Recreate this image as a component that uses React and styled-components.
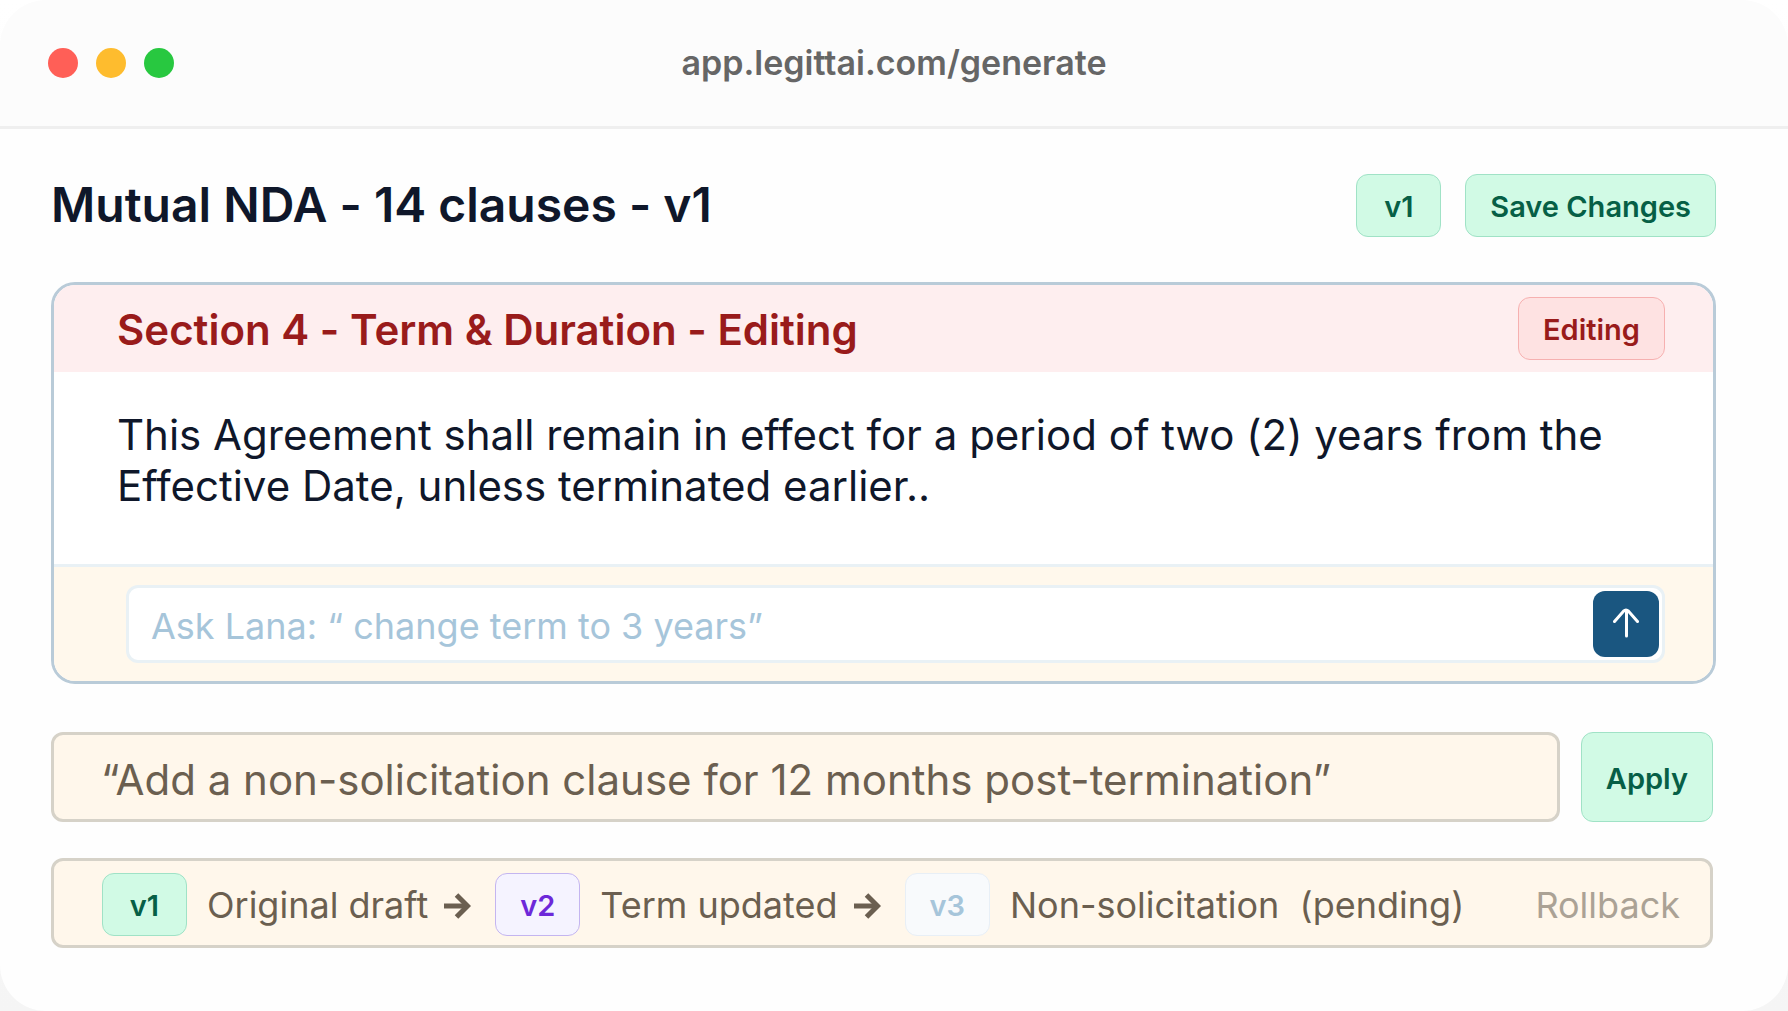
import React, { useState } from "react";
import styled, { createGlobalStyle } from "styled-components";

const GlobalStyle = createGlobalStyle`
  *{ box-sizing:border-box; }
  body{ margin:0; background:linear-gradient(#fff, #f5f5f5); font-family:Inter, sans-serif; font-variant-ligatures:none; }
  button, input{ font-family:inherit; }
`;

/* ===== Window ===== */
const Window = styled.div`
  min-height:100vh; display:flex; flex-direction:column; background:#fefefe;
  border-radius:46px; overflow:hidden;
`;
const TitleBar = styled.header`
  display:grid; grid-template-columns:1fr auto 1fr; align-items:center;
  height:129px; padding:0 48px; background:#fcfcfc; border-bottom:3px solid #efefef;
`;
const Lights = styled.div` display:flex; gap:18px; `;
const Light = styled.span` width:30px; height:30px; border-radius:50%; background:${(p) => p.$color}; `;
const Address = styled.span` color:#666; font-size:34px; font-weight:600; line-height:40px; `;
const Body = styled.main` flex:1; padding:45px 72px 63px 51px; `;

/* ===== Shared parts ===== */
const tones = {
  green: { color:"#065f46", bg:"#d1fae5", line:"#a0e2c6" },
  red: { color:"#991b1b", bg:"#fee2e2", line:"#f6b0b0" },
  violet: { color:"#6d28d9", bg:"#f5f3ff", line:"#c4b5f0" },
  blue: { color:"#a6c5da", bg:"#f8fafc", line:"#e8eff6" },
};
const Pill = styled.span`
  display:inline-flex; align-items:center; justify-content:center; flex:none;
  min-width:85px; height:63px; padding:2px 24px 0; border:1px solid ${(p) => tones[p.$tone].line}; border-radius:12px;
  background:${(p) => tones[p.$tone].bg}; color:${(p) => tones[p.$tone].color};
  font-size:29px; font-weight:600; white-space:nowrap;
`;
const PillButton = styled(Pill).attrs({ as:"button", type:"button" })`
  height:${(p) => (p.$tall ? "90px" : "63px")}; cursor:pointer;
`;

/* ===== Heading ===== */
const Heading = styled.div` display:flex; align-items:center; justify-content:space-between; `;
const Title = styled.h1` margin:0; padding-bottom:2px; color:#0f172a; font-size:48px; font-weight:600; line-height:60px; `;
const Actions = styled.div` display:flex; gap:24px; `;

/* ===== Clause card ===== */
const Card = styled.section`
  margin-top:45px; border:3px solid #b9cbd8; border-radius:24px; background:#fff; overflow:hidden;
`;
const CardHead = styled.div`
  display:flex; align-items:center; justify-content:space-between;
  height:87px; padding:0 48px 0 63px; background:#feeeef;
`;
const CardTitle = styled.h2` margin:0; padding-top:2px; color:#991b1b; font-size:42px; font-weight:600; `;
const ClauseText = styled.p`
  margin:0; min-height:192px; padding:37px 63px 0; color:#0f172a; font-size:42px; line-height:51px;
`;
const CardFoot = styled.div` padding:18px 48px 18px 72px; border-top:3px solid #e9f1f5; background:#fff8ec; `;
const AskBox = styled.form`
  display:flex; align-items:center; height:78px; padding:0 3px 0 22px;
  border:3px solid #e9f1f5; border-radius:12px; background:#fff;
`;
const AskInput = styled.input`
  flex:1; min-width:0; height:66px; padding:4px 0 0; border:0; outline:none; background:none; font-size:36px; color:#0f172a;
  &::placeholder{ color:#a6c5da; opacity:1; }
`;
const SendButton = styled.button`
  display:flex; align-items:center; justify-content:center; width:66px; height:66px; padding:0 0 3px;
  border:0; border-radius:12px; background:#1a5680; cursor:pointer;
`;

/* ===== Prompt + history ===== */
const PromptRow = styled.form` display:flex; gap:21px; margin:48px 3px 0 0; `;
const PromptInput = styled.input`
  flex:1; min-width:0; height:90px; padding:4px 47px 0; border:3px solid #d6d2c8; border-radius:12px;
  background:#fff7eb; color:#6b5f50; font-size:42px; outline:none;
`;
const History = styled.div`
  display:flex; align-items:center; height:90px; margin:36px 3px 0 0; padding:2px 30px 0 48px;
  border:3px solid #d6d2c8; border-radius:12px; background:#fff7eb;
`;
const Step = styled.div` display:flex; align-items:center; margin-right:24px; `;
const StepText = styled.span`
  margin:0 16px 0 20px; padding-top:2px; color:#6b5f50; font-size:36px; white-space:pre;
`;
const Rollback = styled.button`
  margin-left:auto; padding:2px 0 0; border:0; background:none; color:#aba295; font-size:36px; cursor:pointer;
`;

const ArrowUpIcon = () => (
  <svg width="26" height="30" viewBox="0 0 26 30" fill="none" stroke="#fff" strokeWidth="3" strokeLinecap="round" strokeLinejoin="round" aria-hidden="true">
    <path d="M13.5 2.5V28" />
    <path d="M1.5 13.5L10.5 3.2Q13 .8 15.5 3.2L24.5 13.5" />
  </svg>
);

const ArrowRightIcon = () => (
  <svg width="27" height="30" viewBox="0 0 27 30" fill="none" stroke="#6b5f50" strokeWidth="5" aria-hidden="true">
    <path d="M0 17H23" />
    <path d="M12.5 6L23.5 17L12.5 28" />
  </svg>
);

const versions = [
  { id:"v1", tone:"green", text:"Original draft" },
  { id:"v2", tone:"violet", text:"Term updated" },
  { id:"v3", tone:"blue", text:"Non-solicitation  (pending)" },
];

export default function App(){
  const [ask, setAsk] = useState("");
  const [prompt, setPrompt] = useState("“Add a non-solicitation clause for 12 months post-termination”");

  return (
    <>
      <GlobalStyle />
      <Window>
        <TitleBar>
          <Lights>
            <Light $color="#ff5f57" />
            <Light $color="#febc2e" />
            <Light $color="#28c840" />
          </Lights>
          <Address>app.legittai.com/generate</Address>
        </TitleBar>

        <Body>
          <Heading>
            <Title>Mutual NDA - 14 clauses - v1</Title>
            <Actions>
              <Pill $tone="green">v1</Pill>
              <PillButton $tone="green">Save Changes</PillButton>
            </Actions>
          </Heading>

          <Card>
            <CardHead>
              <CardTitle>Section 4 - Term &amp; Duration - Editing</CardTitle>
              <Pill $tone="red">Editing</Pill>
            </CardHead>
            <ClauseText>
              This Agreement shall remain in effect for a period of two (2) years from the Effective Date, unless terminated earlier..
            </ClauseText>
            <CardFoot>
              <AskBox onSubmit={(e) => e.preventDefault()}>
                <AskInput
                  aria-label="Ask Lana"
                  value={ask}
                  placeholder="Ask Lana: “ change term to 3 years”"
                  onChange={(e) => setAsk(e.target.value)}
                />
                <SendButton type="submit" aria-label="Send"><ArrowUpIcon /></SendButton>
              </AskBox>
            </CardFoot>
          </Card>

          <PromptRow onSubmit={(e) => e.preventDefault()}>
            <PromptInput aria-label="Instruction" value={prompt} onChange={(e) => setPrompt(e.target.value)} />
            <PillButton $tone="green" $tall>Apply</PillButton>
          </PromptRow>

          <History>
            {versions.map((v, i) => (
              <Step key={v.id}>
                <Pill $tone={v.tone}>{v.id}</Pill>
                <StepText>{v.text}</StepText>
                {i < versions.length - 1 && <ArrowRightIcon />}
              </Step>
            ))}
            <Rollback type="button">Rollback</Rollback>
          </History>
        </Body>
      </Window>
    </>
  );
}
